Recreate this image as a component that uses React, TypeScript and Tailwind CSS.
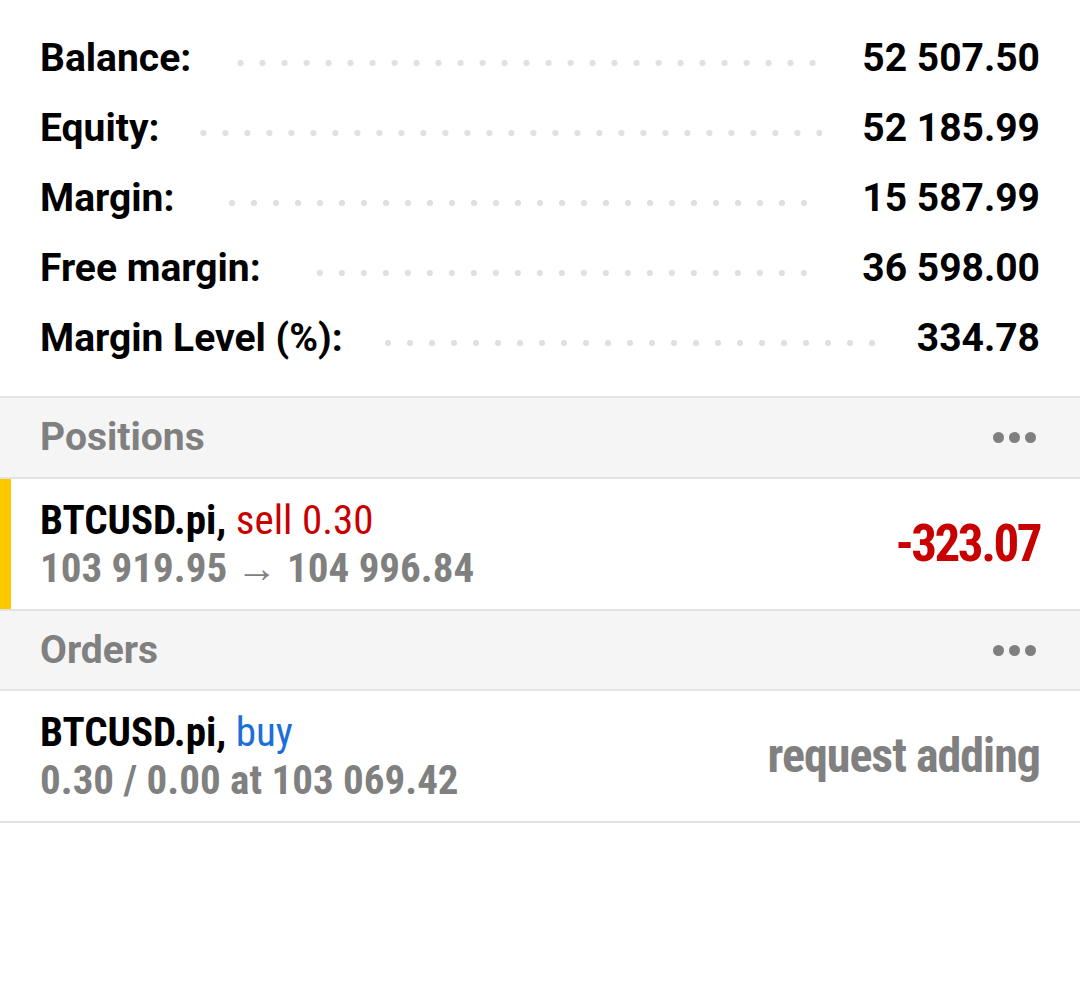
import React from "react";

const summary = [
  { label: "Balance:", value: "52 507.50" },
  { label: "Equity:", value: "52 185.99" },
  { label: "Margin:", value: "15 587.99" },
  { label: "Free margin:", value: "36 598.00" },
  { label: "Margin Level (%):", value: "334.78" },
];

const MoreDots = () => (
  <div className="flex items-center gap-[5px] mr-[4px]">
    <span className="w-[11px] h-[11px] rounded-full bg-[#7f7f7f]" />
    <span className="w-[11px] h-[11px] rounded-full bg-[#7f7f7f]" />
    <span className="w-[11px] h-[11px] rounded-full bg-[#7f7f7f]" />
  </div>
);

const SectionHeader = ({ title, h }: { title: string; h: string }) => (
  <div className={`flex items-center justify-between ${h} px-10 bg-[#f5f5f5] border-b-2 border-[#e3e3e3]`}>
    <span className="text-[39px] font-bold text-[#808080] leading-none">{title}</span>
    <MoreDots />
  </div>
);

export default function App() {
  return (
    <div className="w-[1080px] min-h-[990px] bg-white font-['Roboto',sans-serif]">
      {/* Account summary */}
      <div className="pt-[23px] pb-[23px] px-10 border-b-2 border-[#e3e3e3]">
        {summary.map((row) => (
          <div key={row.label} className="flex items-center h-[70px]">
            <span className="text-[39px] font-bold text-black whitespace-nowrap">{row.label}</span>
            <div className="flex-1 mx-[40px] mt-[10px] h-[8px] bg-[radial-gradient(circle,#e0e0e0_2.8px,transparent_3.4px)] bg-[length:22px_8px] bg-repeat-x bg-center" />
            <span className="text-[39px] font-bold text-black whitespace-nowrap">{row.value}</span>
          </div>
        ))}
      </div>

      <SectionHeader title="Positions" h="h-[81px]" />

      {/* Position row */}
      <div className="flex h-[132px] border-b-2 border-[#e3e3e3]">
        <div className="w-[11px] bg-[#fcc800]" />
        <div className="flex-1 flex items-center justify-between pl-[29px] pr-10 font-stretch-condensed">
          <div className="text-[41px] leading-[48px]">
            <div>
              <span className="font-bold text-black">BTCUSD.pi, </span>
              <span className="text-[#c80000]">sell 0.30</span>
            </div>
            <div className="font-bold text-[#808080]">103 919.95 → 104 996.84</div>
          </div>
          <span className="text-[51px] font-bold text-[#c80000] tracking-[-2.5px]">-323.07</span>
        </div>
      </div>

      <SectionHeader title="Orders" h="h-[80px]" />

      {/* Order row */}
      <div className="flex items-center justify-between h-[132px] px-10 border-b-2 border-[#e3e3e3] font-stretch-condensed">
        <div className="text-[41px] leading-[48px]">
          <div>
            <span className="font-bold text-black">BTCUSD.pi, </span>
            <span className="text-[#1a6fd8]">buy</span>
          </div>
          <div className="font-bold text-[#808080]">0.30 / 0.00 at 103 069.42</div>
        </div>
        <span className="text-[48px] font-bold text-[#808080] tracking-[-1px]">request adding</span>
      </div>
    </div>
  );
}
